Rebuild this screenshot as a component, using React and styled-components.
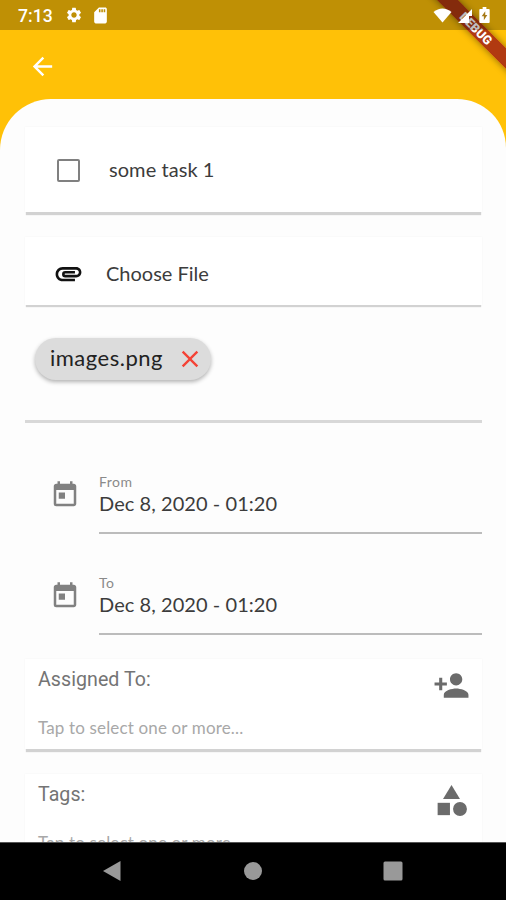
import React from "react";
import styled, { createGlobalStyle } from "styled-components";
import {
  MdArrowBack,
  MdAttachment,
  MdCategory,
  MdClose,
  MdPersonAdd,
  MdSdCard,
  MdSettings,
  MdToday,
} from "react-icons/md";

const GlobalStyle = createGlobalStyle`
  * {
    box-sizing: border-box;
  }

  body {
    margin: 0;
    background: #000;
  }
`;

const Screen = styled.div`
  position: relative;
  display: flex;
  flex-direction: column;
  width: 506px;
  height: 900px;
  overflow: hidden;
  background: #ffc107;
  font-family: Lato, "Noto Sans", sans-serif;
  color: #3c3c3c;
`;

// the system bar darkens whatever the app draws below it, ribbon included
const StatusBar = styled.div`
  position: relative;
  z-index: 2;
  flex: none;
  display: flex;
  align-items: center;
  height: 30px;
  padding: 0 16px 0 18px;
  background: rgba(0, 0, 0, 0.25);
  color: #fff;

  svg {
    display: block;
  }
`;

const Clock = styled.span`
  width: 47px;
  font-family: Roboto, sans-serif;
  font-size: 17.6px;
  font-weight: 500;
  line-height: 30px;
  padding-top: 2px;
`;

const StatusIcons = styled.div`
  display: flex;
  align-items: center;
  gap: ${(props) => props.$gap}px;
  margin-left: ${(props) => (props.$end ? "auto" : "0")};
`;

const Header = styled.header`
  flex: none;
  display: flex;
  align-items: center;
  height: 69px;
  padding: 4px 0 0 28px;
  color: #fff;
`;

const Sheet = styled.main`
  flex: 1;
  min-height: 0;
  overflow: hidden;
  padding: 28px 24px 0 25px;
  border-radius: 51px 49px 0 0;
  background: #fdfdfd;
`;

const Card = styled.section`
  display: flex;
  align-items: center;
  height: ${(props) => props.$height}px;
  margin-bottom: ${(props) => props.$gap}px;
  background: #fff;
  box-shadow:
    0 ${(props) => props.$edge}px 1px -1px #d2d2d2,
    0 0 2px rgba(0, 0, 0, 0.04);
`;

const CardIcon = styled.div`
  display: flex;
  align-items: center;
  justify-content: center;
  width: 86px;
  padding-top: ${(props) => props.$drop}px;
  color: #111;
`;

const CheckBox = styled.div`
  width: 23px;
  height: 23px;
  border: 2px solid #808080;
  border-radius: 2px;
`;

const Label = styled.span`
  font-size: ${(props) => props.$size || 20}px;
  line-height: 26px;
  letter-spacing: ${(props) => props.$spacing || 0}px;
  margin-left: ${(props) => props.$left || 0}px;
  padding-top: ${(props) => props.$drop || 0}px;
  padding-bottom: ${(props) => props.$lift || 0}px;
  white-space: nowrap;
`;

const FileList = styled.div`
  height: 117px;
  padding: 32px 0 0 10px;
  border-bottom: 3px solid #d8d8d8;
`;

const Chip = styled.div`
  display: flex;
  align-items: center;
  justify-content: space-between;
  width: 176px;
  height: 42px;
  padding: 0 7px 0 15px;
  border-radius: 21px;
  background: #dcdcdc;
  box-shadow: 0 2px 4px rgba(0, 0, 0, 0.3);
  color: #222;

  svg {
    color: #f44336;
  }
`;

const Dates = styled.div`
  margin-bottom: 24px;
`;

const DateRow = styled.div`
  display: flex;
  height: 63px;
  margin-top: ${(props) => props.$top}px;

  > svg {
    flex: none;
    margin: 9px 19px 0 25px;
    color: #818181;
  }
`;

const DateField = styled.div`
  flex: 1;
  border-bottom: 2px solid #bcbcbc;
`;

const FieldName = styled.div`
  height: 20px;
  font-size: 14px;
  line-height: 21px;
  letter-spacing: 0.5px;
  color: #8a8a8a;
`;

const DateValue = styled.div`
  font-size: 20px;
  line-height: 24px;
  letter-spacing: 0.06px;
  color: #3c3c3c;
`;

const Picker = styled(Card)`
  align-items: flex-start;
  justify-content: space-between;
  padding: 8px 12px 0 13px;
  color: #6b6b6b;
`;

const PickerTitle = styled.div`
  height: 48px;
  font-family: Roboto, sans-serif;
  font-size: 19.6px;
  line-height: 26px;
  letter-spacing: 0.05px;
  color: #747474;
`;

const PickerHint = styled.div`
  font-size: 17px;
  line-height: 26px;
  letter-spacing: 0.15px;
  color: #a8a8a8;
`;

const NavBar = styled.nav`
  flex: none;
  display: flex;
  align-items: center;
  justify-content: space-between;
  height: 58px;
  padding: 0 103px 2px 101px;
  background: #000;
  border-top: 1px solid #555;
`;

const DebugCorner = styled.div`
  position: absolute;
  z-index: 1;
  top: 0;
  right: 0;
  width: 90px;
  height: 90px;
  overflow: hidden;
`;

const DebugRibbon = styled.div`
  position: absolute;
  top: 21px;
  left: 0;
  width: 120px;
  height: 15px;
  transform: rotate(45deg);
  background: rgba(165, 38, 20, 0.87);
  box-shadow: 0 0 7px rgba(0, 0, 0, 0.45);
  color: #fff;
  font-family: Roboto, sans-serif;
  font-size: 12.5px;
  font-weight: 900;
  line-height: 15px;
  text-align: center;
`;

function Wifi() {
  return (
    <svg width="19" height="15" viewBox="0 0 19 15" fill="#fff">
      <path d="M0.5 4C6 -0.7 13 -0.7 18.5 4L9.5 14.5Z" />
    </svg>
  );
}

function Signal() {
  return (
    <svg width="15" height="15" viewBox="0 0 15 15" fill="#fff">
      <path d="M0 15L14 1V8H11V15Z" />
    </svg>
  );
}

function Battery() {
  return (
    <svg width="11" height="16" viewBox="0 0 11 17">
      <path fill="#fff" d="M3.5 0h4v2H10q1 0 1 1v13q0 1-1 1H1q-1 0-1-1V3q0-1 1-1h2.5z" />
      <path fill="#a67a18" d="M6.3 4.5v4h2.2L4.8 14v-4.3H2.5z" />
    </svg>
  );
}

function DateInput({ name, value, top }) {
  return (
    <DateRow $top={top}>
      <MdToday size={30} />
      <DateField>
        <FieldName>{name}</FieldName>
        <DateValue>{value}</DateValue>
      </DateField>
    </DateRow>
  );
}

function PickerCard({ title, icon, gap }) {
  return (
    <Picker $height={90} $gap={gap} $edge={4}>
      <div>
        <PickerTitle>{title}</PickerTitle>
        <PickerHint>Tap to select one or more...</PickerHint>
      </div>
      {icon}
    </Picker>
  );
}

function App() {
  return (
    <>
      <GlobalStyle />
      <Screen>
        <StatusBar>
          <Clock>7:13</Clock>
          <StatusIcons $gap={8}>
            <MdSettings size={18} />
            <MdSdCard size={19} />
          </StatusIcons>
          <StatusIcons $end $gap={6}>
            <Wifi />
            <Signal />
            <Battery />
          </StatusIcons>
        </StatusBar>

        <Header>
          <MdArrowBack size={29} />
        </Header>

        <Sheet>
          <Card $height={85} $gap={25} $edge={4}>
            <CardIcon $drop={2}>
              <CheckBox />
            </CardIcon>
            <Label $left={-2} $lift={1} $spacing={0.06}>
              some task 1
            </Label>
          </Card>

          <Card $height={68} $gap={1} $edge={3}>
            <CardIcon $drop={5}>
              <MdAttachment size={31} />
            </CardIcon>
            <Label $left={-5} $drop={3}>
              Choose File
            </Label>
          </Card>

          <FileList>
            <Chip>
              <Label $size={22} $spacing={0.5} $lift={2}>
                images.png
              </Label>
              <MdClose size={28} />
            </Chip>
          </FileList>

          <Dates>
            <DateInput name="From" value="Dec 8, 2020 - 01:20" top={48} />
            <DateInput name="To" value="Dec 8, 2020 - 01:20" top={38} />
          </Dates>

          <PickerCard
            title="Assigned To:"
            icon={<MdPersonAdd size={37} />}
            gap={25}
          />
          <PickerCard title="Tags:" icon={<MdCategory size={37} />} />
        </Sheet>

        <NavBar>
          <svg width="22" height="22" viewBox="0 0 22 22" fill="#999">
            <path d="M2 11L19.5 1V21Z" />
          </svg>
          <svg width="20" height="20" viewBox="0 0 20 20" fill="#999">
            <circle cx="10" cy="10" r="9" />
          </svg>
          <svg width="20" height="20" viewBox="0 0 20 20" fill="#999">
            <rect x="0.5" y="0.5" width="19" height="19" rx="1.5" />
          </svg>
        </NavBar>

        <DebugCorner>
          <DebugRibbon>DEBUG</DebugRibbon>
        </DebugCorner>
      </Screen>
    </>
  );
}

export default App;
